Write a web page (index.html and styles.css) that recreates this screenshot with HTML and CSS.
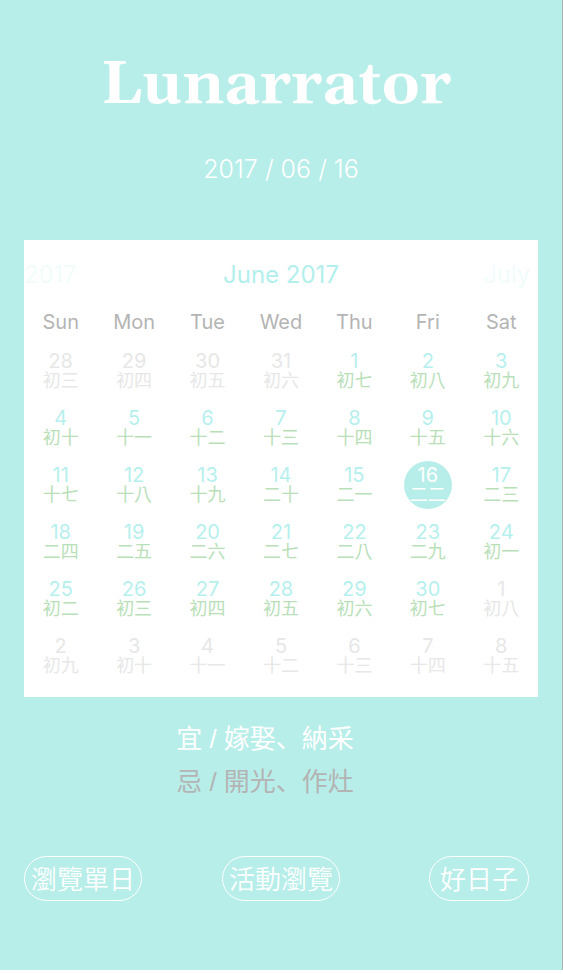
FILE: index.html
```
<!DOCTYPE html>
<html lang="zh-Hant">
<head>
<meta charset="utf-8">
<meta name="viewport" content="width=device-width, initial-scale=1">
<title>Lunarrator</title>
<link rel="stylesheet" href="styles.css">
</head>
<body>
<main class="app">
  <header class="header">
    <h1 class="title">Lunarrator</h1>
    <p class="date">2017 / 06 / 16</p>
  </header>

  <section class="calendar">
    <nav class="months">
      <button class="month side" type="button">2017</button>
      <h2 class="month">June 2017</h2>
      <button class="month side next" type="button">July</button>
    </nav>
    <table class="days">
      <thead>
        <tr><th>Sun</th><th>Mon</th><th>Tue</th><th>Wed</th><th>Thu</th><th>Fri</th><th>Sat</th></tr>
      </thead>
      <tbody>
        <tr>
          <td class="out"><span class="day">28<small>初三</small></span></td>
          <td class="out"><span class="day">29<small>初四</small></span></td>
          <td class="out"><span class="day">30<small>初五</small></span></td>
          <td class="out"><span class="day">31<small>初六</small></span></td>
          <td><span class="day">1<small>初七</small></span></td>
          <td><span class="day">2<small>初八</small></span></td>
          <td><span class="day">3<small>初九</small></span></td>
        </tr>
        <tr>
          <td><span class="day">4<small>初十</small></span></td>
          <td><span class="day">5<small>十一</small></span></td>
          <td><span class="day">6<small>十二</small></span></td>
          <td><span class="day">7<small>十三</small></span></td>
          <td><span class="day">8<small>十四</small></span></td>
          <td><span class="day">9<small>十五</small></span></td>
          <td><span class="day">10<small>十六</small></span></td>
        </tr>
        <tr>
          <td><span class="day">11<small>十七</small></span></td>
          <td><span class="day">12<small>十八</small></span></td>
          <td><span class="day">13<small>十九</small></span></td>
          <td><span class="day">14<small>二十</small></span></td>
          <td><span class="day">15<small>二一</small></span></td>
          <td class="selected"><span class="day">16<small>二二</small></span></td>
          <td><span class="day">17<small>二三</small></span></td>
        </tr>
        <tr>
          <td><span class="day">18<small>二四</small></span></td>
          <td><span class="day">19<small>二五</small></span></td>
          <td><span class="day">20<small>二六</small></span></td>
          <td><span class="day">21<small>二七</small></span></td>
          <td><span class="day">22<small>二八</small></span></td>
          <td><span class="day">23<small>二九</small></span></td>
          <td><span class="day">24<small>初一</small></span></td>
        </tr>
        <tr>
          <td><span class="day">25<small>初二</small></span></td>
          <td><span class="day">26<small>初三</small></span></td>
          <td><span class="day">27<small>初四</small></span></td>
          <td><span class="day">28<small>初五</small></span></td>
          <td><span class="day">29<small>初六</small></span></td>
          <td><span class="day">30<small>初七</small></span></td>
          <td class="out"><span class="day">1<small>初八</small></span></td>
        </tr>
        <tr>
          <td class="out"><span class="day">2<small>初九</small></span></td>
          <td class="out"><span class="day">3<small>初十</small></span></td>
          <td class="out"><span class="day">4<small>十一</small></span></td>
          <td class="out"><span class="day">5<small>十二</small></span></td>
          <td class="out"><span class="day">6<small>十三</small></span></td>
          <td class="out"><span class="day">7<small>十四</small></span></td>
          <td class="out"><span class="day">8<small>十五</small></span></td>
        </tr>
      </tbody>
    </table>
  </section>

  <section class="advice" lang="zh-Hans">
    <p class="good">宜 / 嫁娶、納采</p>
    <p class="bad">忌 / 開光、作灶</p>
  </section>

  <footer class="actions">
    <button class="action" type="button">瀏覽單日</button>
    <button class="action" type="button">活動瀏覽</button>
    <button class="action" type="button">好日子</button>
  </footer>
</main>
</body>
</html>
```
FILE: styles.css
```
* {
  box-sizing: border-box;
}

body {
  margin: 0;
  background: #fff;
  font-family: Inter, "Noto Sans CJK TC", sans-serif;
}

h1, h2, p {
  margin: 0;
  font-weight: 400;
}

button {
  margin: 0;
  padding: 0;
  border: 0;
  background: none;
  font: inherit;
  cursor: pointer;
}

.app {
  padding: 50px 24px 69px;
  border-right: 1px solid #b0b0b0;
  background: #b7eee9;
  color: #fff;
}

.header {
  text-align: center;
}

.title {
  padding-right: 10px;
  font: 700 60px/72px Gelasio, "DejaVu Serif", serif;
}

.date {
  padding: 31px 0 55px;
  font-size: 25px;
  line-height: 32px;
  font-weight: 300;
}

.calendar {
  padding: 17px 0 13px;
  background: #fff;
}

.months {
  display: grid;
  grid-template-columns: 1fr auto 1fr;
  align-items: center;
}

.month {
  color: #b3efec;
  font-size: 24px;
  line-height: 36px;
}

.side {
  justify-self: start;
  color: #effcfb;
  font-weight: 300;
}

.next {
  justify-self: end;
  padding-right: 8px;
}

.days {
  width: 100%;
  table-layout: fixed;
  border-collapse: collapse;
}

.days th {
  height: 49px;
  padding: 8px 0 0;
  color: #b4b4b4;
  font-size: 20px;
  line-height: 24px;
  font-weight: 400;
}

.days td {
  height: 57px;
  padding: 0;
  color: #b6f0ee;
}

.day {
  display: flex;
  flex-direction: column;
  align-items: center;
  width: 48px;
  height: 48px;
  margin: 0 auto;
  padding-top: 4px;
  border-radius: 50%;
  font-size: 20px;
  line-height: 20px;
}

.day small {
  color: #b9dfb9;
  font-size: 18px;
  line-height: 20px;
  font-weight: 400;
}

.days .out,
.out small {
  color: #e7e7e7;
}

.selected .day {
  background: #b7eee9;
}

.selected .day,
.selected small {
  color: #fff;
}

.advice {
  width: max-content;
  margin: 21px auto 0;
  padding-right: 32px;
  font-family: "Liberation Sans", "Noto Sans CJK SC", sans-serif;
  font-size: 26px;
  line-height: 43px;
  font-weight: 350;
}

.bad {
  color: #b4b4b4;
}

.actions {
  display: grid;
  grid-template-columns: 118px 1fr 118px;
  justify-items: center;
  margin-top: 52px;
}

.action {
  min-width: 100px;
  height: 45px;
  padding: 2px 6px 0;
  border: 1px solid #fff;
  border-radius: 23px;
  color: #fff;
  font-size: 26px;
  font-weight: 350;
  line-height: 41px;
}
```
